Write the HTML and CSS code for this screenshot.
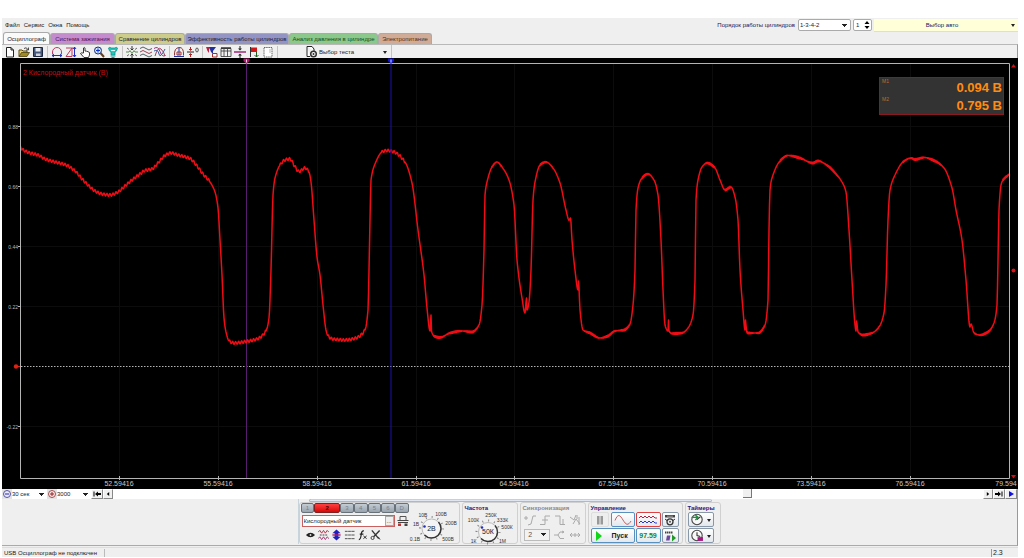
FILE: index.html
```html
<!DOCTYPE html>
<html lang="ru">
<head>
<meta charset="utf-8">
<title>USB Осциллограф</title>
<link rel="stylesheet" href="styles.css">
</head>
<body>
<div class="app">
  <header class="menubar">
    <nav class="menu">
      <button>Файл</button><button>Сервис</button><button>Окна</button><button>Помощь</button>
    </nav>
    <div class="engine">
      <label for="order">Порядок работы цилиндров</label>
      <select id="order" class="field order"><option>1-3-4-2</option></select>
      <div class="field spin">
        <input id="cyl" type="text" value="1" aria-label="Цилиндр">
        <svg viewBox="0 0 6 10" class="spin-arrows"><path d="M3 1L5.500 4H.5zM3 9L.5 6h5z"/></svg>
      </div>
      <button class="auto"><span>Выбор авто</span><svg viewBox="0 0 6 6" class="caret"><path d="M1 2h4L3 5z"/></svg></button>
    </div>
  </header>

  <nav class="tabs">
    <button class="tab scope">Осциллограф</button>
    <button class="tab ignition">Система зажигания</button>
    <button class="tab compare">Сравнение цилиндров</button>
    <button class="tab effect">Эффективность работы цилиндров</button>
    <button class="tab pressure">Анализ давления в цилиндре</button>
    <button class="tab power">Электропитание</button>
  </nav>

  <div class="toolbar">
    <div class="tools">
      <button aria-label="Новый"><svg viewBox="0 0 12 12"><path d="M2.500 1.500h4.500l2.500 2.500v7h-7zM7 1.500V4h2.500" fill="#fff" stroke="#222"/></svg></button>
      <button aria-label="Открыть"><svg viewBox="0 0 12 12"><path d="M1 10.500V4h3l1 1h4v2" fill="#e8d070" stroke="#5a4a10"/><path d="M1 10.500L3.500 6.500H11.500L9 10.500z" fill="#a08a20" stroke="#4a4010" stroke-width=".8"/><path d="M6 2.500q2-2 4 1M10.500 1.500V4H8" fill="none" stroke="#222" stroke-width=".8"/></svg></button>
      <button aria-label="Сохранить"><svg viewBox="0 0 12 12"><path d="M1.500 1.500h9v9h-9z" fill="#46587a" stroke="#1b2740"/><path d="M3.500 2h5v3.500h-5z" fill="#e8ecf4"/><path d="M4 7.500h4.500V10H4z" fill="#d0d4dc"/></svg></button>
    </div>
    <div class="tools">
      <button aria-label="Период"><svg viewBox="0 0 12 12" fill="none"><path d="M1.500 8V6a4.500 4.500 0 0 1 9 0v2" stroke="#c03a60"/><path d="M1 9.500h10M3 8L1 9.500 3 11M9 8l2 1.500L9 11" stroke="#2030c0"/></svg></button>
      <button aria-label="Амплитуда"><svg viewBox="0 0 12 12" fill="none"><path d="M1 10.500L7 2v8.500zM1 2h7" stroke="#c03a60"/><path d="M9.500 1v10M8 3l1.500-2L11 3M8 9l1.500 2L11 9" stroke="#2030c0"/></svg></button>
      <button aria-label="Рука"><svg viewBox="0 0 12 12"><path d="M4.500 7V2q.8-1 1.500 0v3l1.500.2 1.500.5 1.500.8V9l-1 2.500H5L1.500 7.500q.5-1 1.500-.5z" fill="#fff" stroke="#222" stroke-width=".9"/></svg></button>
      <button aria-label="Масштаб"><svg viewBox="0 0 12 12"><circle cx="5" cy="4.500" r="3.500" fill="#c8e4ff" stroke="#1c3070"/><path d="M3 4.500h4M5 2.500v4" stroke="#1030c0"/><path d="M7.500 7l3.500 4" stroke="#604020" stroke-width="2"/></svg></button>
      <button aria-label="Датчик"><svg viewBox="0 0 12 12"><path d="M1.500 2q1.500-1.500 2.500 0h4q1-1.500 2.500 0L9.500 5 8 6v3H4V6L2.500 5z" fill="#20c8b8" stroke="#108888" stroke-width=".7"/><path d="M3.500 10h5M4.500 11.500h3" stroke="#20a0a0"/><path d="M4 4.500h4" stroke="#e0fffa"/></svg></button>
    </div>
    <div class="tools">
      <button aria-label="Сжать"><svg viewBox="0 0 12 12" fill="none" stroke="#333"><path d="M6 0v4M4.500 2.500L6 4l1.500-1.500M6 12V8M4.500 9.500L6 8l1.500 1.500"/><path d="M0 6h3l1-1.500 2 3 2-3L9 6h3" stroke="#5a8a50"/><path d="M1 2l2 1.500M11 2L9 3.500M1 10l2-1.500M11 10L9 8.500" stroke="#666"/></svg></button>
      <button aria-label="Каналы раздельно"><svg viewBox="0 0 12 12" fill="none" stroke="#506060"><path d="M0 2.500q3-3 6 0t6 0"/><path d="M0 6q3-3 6 0t6 0" stroke="#a04050"/><path d="M0 9.500q3-3 6 0t6 0"/></svg></button>
      <button aria-label="Каналы вместе"><svg viewBox="0 0 12 12" fill="none"><path d="M0 2.500q4-3 6 3t5.500 4" stroke="#a03080"/><path d="M0 5q4-2 5 3t6-5" stroke="#3060a0"/><path d="M1 10Q4 0 7 3t4 7" stroke="#a04060"/></svg></button>
    </div>
    <div class="tools">
      <button aria-label="Такт"><svg viewBox="0 0 12 12" fill="none"><path d="M1.500 9.500Q1 2 6 1.500T10.500 9.500" stroke="#903030"/><path d="M6 2v7M1 10.500h10" stroke="#2030a0"/><path d="M4 9V6h4v3z" stroke="#a03030"/></svg></button>
      <button aria-label="Ноль"><svg viewBox="0 0 12 12" fill="none"><path d="M0 6h7" stroke="#222"/><path d="M3.500 1v3M3.500 11V8M2 3l1.500 1.500L5 3M2 9l1.500-1.500L5 9" stroke="#c02020"/><ellipse cx="10" cy="4" rx="1.300" ry="2" stroke="#333" stroke-width=".8"/></svg></button>
    </div>
    <div class="tools">
      <button aria-label="Фильтр"><svg viewBox="0 0 12 12"><path d="M0 1h4l-1 3v3L1.500 5z" fill="#c02040"/><path d="M3 1h7L7 5v3L5 6z" fill="#2030a0"/><path d="M6.500 7.500H11V11H6.500z" fill="#fff" stroke="#a03030"/></svg></button>
      <button aria-label="Таблица"><svg viewBox="0 0 12 12" fill="none" stroke="#333"><path d="M1 2.500h10v8H1zM1 5h10M4 3v7.500M7.500 3v7.500" stroke-width=".8"/><path d="M1 2h10" stroke-width="1.500"/></svg></button>
      <button aria-label="Разделить"><svg viewBox="0 0 12 12"><path d="M0 6h12" stroke="#a02878" stroke-width="1.500"/><path d="M6 0v3M6 12V9" stroke="#222"/><path d="M4 2.500h4L6 4.500zM4 9.500h4L6 7.500z" fill="#222"/></svg></button>
      <button aria-label="Флаг"><svg viewBox="0 0 12 12"><path d="M2.500 1v10" stroke="#333"/><path d="M3 1.500h6v4.500H3z" fill="#d01818"/><path d="M8.500 6v5M6.500 9l2 2 2-2" fill="none" stroke="#206020"/></svg></button>
      <button aria-label="Заметка"><svg viewBox="0 0 12 12"><path d="M2 1.500h8v9.500H2z" fill="#fff" stroke="#666" stroke-dasharray="1.500 .7"/><path d="M7 4h2M7 6h2" stroke="#999" stroke-width=".7"/></svg></button>
    </div>
    <button class="test">
      <svg viewBox="0 0 12 12"><path d="M1 .5h5L8 3v2M1 .5v10h3" fill="#fff" stroke="#222"/><circle cx="7.500" cy="8" r="2.800" fill="#fff" stroke="#333" stroke-width="1.500"/><circle cx="7.500" cy="8" r="1" fill="#333"/></svg>
      <span>Выбор теста</span>
      <svg viewBox="0 0 6 6" class="caret"><path d="M1 2h4L3 5z"/></svg>
    </button>
  </div>

  <main class="chart">
    <svg class="plot" viewBox="2 58 1016 431" role="img" aria-label="Осциллограмма">
      <path class="grid" d="M21 126.500H1009M21 186.500H1009M21 246.500H1009M21 306.500H1009M21 426.500H1009M119.500 64V478M218.500 64V478M317.500 64V478M416.500 64V478M514.500 64V478M613.500 64V478M712.500 64V478M811.500 64V478M910.500 64V478"/>
      <path class="zero" d="M21 366.500H1009"/>
      <path class="cursor-a" d="M246.500 60V478"/>
      <path id="trace" class="trace"/>
      <path class="cursor-b" d="M391 60V478"/>
      <path class="frame" d="M20.500 63.500H1009.500V478.500H20.500z"/>
      <path class="frame" d="M18 126.500h2M18 186.500h2M18 246.500h2M18 306.500h2M18 426.500h2M119.500 476v4M218.500 476v4M317.500 476v4M416.500 476v4M514.500 476v4M613.500 476v4M712.500 476v4M811.500 476v4M910.500 476v4"/>
      <path fill="#b01870" d="M243.500 58.500h6v2.500l-3 3-3-3z"/><path stroke="#ffd0e8" d="M246.500 59.500v3"/>
      <path fill="#1414d8" d="M388 58.500h6v2.500l-3 3-3-3z"/><path stroke="#c8e0ff" d="M391 59.500v3"/>
      <path fill="#d01018" d="M1011 67.500h5l-2.500-3.500zM1011 475h5l-2.500 3.500z"/>
      <circle cx="1013.500" cy="270.500" r="2" fill="#e01018"/>
      <circle cx="16" cy="366.500" r="2.200" fill="#e02010"/><path stroke="#e02010" d="M16 366.500h4"/>
      <g class="y-labels">
        <text x="18" y="128.500">0.88</text><text x="18" y="188.500">0.66</text><text x="18" y="248.500">0.44</text><text x="18" y="308.500">0.22</text><text x="18" y="428.500">-0.22</text>
      </g>
      <g class="x-labels">
        <text x="119" y="486">52.59416</text><text x="218" y="486">55.59416</text><text x="317" y="486">58.59416</text><text x="416" y="486">61.59416</text><text x="514" y="486">64.59416</text><text x="613" y="486">67.59416</text><text x="712" y="486">70.59416</text><text x="811" y="486">73.59416</text><text x="910" y="486">76.59416</text><text x="1006" y="486">79.594</text>
      </g>
      <text class="channel-name" x="23" y="75">2 Кислородный датчик (В)</text>
    </svg>
    <div class="readout">
      <div><small>M1</small><b>0.094 В</b></div>
      <div><small>M2</small><b>0.795 В</b></div>
    </div>
  </main>

  <div class="scroll">
    <svg viewBox="0 0 10 10" class="mark"><circle cx="5" cy="5" r="3.500" fill="#e8e8ff" stroke="#5858a0"/><path d="M3 5h4" stroke="#2828a0"/></svg>
    <select class="span" aria-label="Длительность"><option>30 сек</option></select>
    <svg viewBox="0 0 10 10" class="mark"><circle cx="5" cy="5" r="3.500" fill="#ffe8e8" stroke="#a05050"/><path d="M3 5h4M5 3v4" stroke="#902020"/></svg>
    <select class="points" aria-label="Точки"><option>3000</option></select>
    <button class="step" aria-label="В начало"><svg viewBox="0 0 10 8"><path d="M1.500 1.500h1v5h-1zM6 1.500v5L3 4zM9 3v2H6V3z"/></svg></button>
    <button class="step small" aria-label="Назад"><svg viewBox="0 0 10 8"><path d="M6.500 1.500v5L3.500 4z"/></svg></button>
    <div class="track"><button class="thumb" aria-label="Прокрутка"></button></div>
    <button class="step small" aria-label="Вперёд"><svg viewBox="0 0 10 8"><path d="M3.500 1.500v5L6.500 4z"/></svg></button>
    <button class="step" aria-label="В конец"><svg viewBox="0 0 10 8"><path d="M8.500 1.500h-1v5h1zM4 1.500v5L7 4zM1 3v2h3V3z"/></svg></button>
    <button class="step" aria-label="Воспроизвести"><svg viewBox="0 0 10 8"><path d="M3 1v6l5-3z" fill="#1010e0"/></svg></button>
  </div>

  <section class="dock">
    <div class="panel">
      <div class="grip"></div>
      <div class="groups">
        <div class="group channel">
          <div class="channel-main">
            <div class="channels">
              <button>1</button><button class="on">2</button><button>3</button><button>4</button><button>5</button><button>6</button><button>D</button>
            </div>
            <div class="sensor-row">
              <div class="sensor"><input type="text" value="Кислородный датчик" aria-label="Датчик"><button>...</button></div>
              <svg viewBox="0 0 12 12" class="ic"><path d="M3 5V1.500h6V5" fill="none" stroke="#555"/><path d="M.5 5.500h11M1 7.500h10" stroke="#444"/><path d="M1 8.500h3V11H1z" fill="#c03030"/><path d="M7.500 8.500h3V11h-3z" fill="#444"/></svg>
            </div>
            <div class="channel-tools">
              <button aria-label="Показать"><svg viewBox="0 0 12 12"><path d="M1 6q5-5 10 0-5 5-10 0z" fill="#222"/><circle cx="6" cy="6" r="1" fill="#ddd"/></svg></button>
              <button aria-label="Сигнал"><svg viewBox="0 0 12 12" fill="none"><path d="M0 3l2-2 2 3 2-3 2 3 2-3 2 2" stroke="#c02040"/><path d="M0 10l2-2 2 3 2-3 2 3 2-3 2 2" stroke="#a03070"/><path d="M2 6h8" stroke="#333" stroke-dasharray="2 1"/></svg></button>
              <button aria-label="Инверсия"><svg viewBox="0 0 12 12"><path d="M6 0l4.500 4H8v4h2.500L6 12 1.500 8H4V4H1.500z" fill="#2020c0"/><path d="M1.500 6h9" stroke="#b02060" stroke-width="1.500"/></svg></button>
              <button aria-label="Уровни"><svg viewBox="0 0 12 12"><path d="M1 2h11M1 6h11M1 10h11" stroke="#444" stroke-dasharray="3 .5"/></svg></button>
              <button aria-label="Фильтр"><svg viewBox="0 0 12 12" fill="none" stroke="#222"><path d="M2 11Q4 11 4.500 6T7.500 1.500M3 5h4" stroke-width="1.300"/><path d="M7 7l3.500 3M10.500 7L7 10"/></svg></button>
              <button aria-label="Настройка"><svg viewBox="0 0 12 12" fill="none" stroke="#333"><path d="M2 1l7.500 9M10.500 1L4 8" stroke-width="1.500"/><circle cx="2.800" cy="9.200" r="1.700"/><path d="M9 8l2 3"/></svg></button>
            </div>
          </div>
          <svg class="knob volts" viewBox="410 508 50 36" role="slider" aria-label="Диапазон" aria-valuenow="2">
            <circle cx="432.500" cy="530.500" r="11.500" class="ticks"/>
            <circle cx="432.500" cy="530.500" r="9.500" class="dial"/>
            <path d="M439.500 524a9.500 9.500 0 0 1-14 13" class="shade"/>
            <circle cx="425.500" cy="528.500" r="1.300" fill="#2030c0"/>
            <g><text x="416" y="543">0.1В</text><text x="417" y="528">1В</text><text x="424" y="519">10В</text><text x="442" y="518">100В</text><text x="452" y="527">200В</text><text x="449" y="543">500В</text></g>
            <text class="value" x="432.500" y="533">2В</text>
          </svg>
        </div>

        <fieldset class="group freq">
          <legend>Частота</legend>
          <svg class="knob" viewBox="463 511 54 33" role="slider" aria-label="Частота" aria-valuenow="50">
            <circle cx="488" cy="531" r="11.500" class="ticks"/>
            <circle cx="488" cy="531" r="9.500" class="dial"/>
            <path d="M495 524.500a9.500 9.500 0 0 1-14 13" class="shade"/>
            <circle cx="482" cy="526.500" r="1.300" fill="#2030c0"/>
            <g><text x="473.500" y="542">1К</text><text x="473.500" y="521">100К</text><text x="491" y="516">250К</text><text x="502.500" y="521">333К</text><text x="507" y="527.500">500К</text><text x="502.500" y="542">1М</text></g>
            <text class="value" x="488" y="533">50К</text>
          </svg>
        </fieldset>

        <fieldset class="group sync">
          <legend>Синхронизация</legend>
          <div class="sync-row">
            <svg viewBox="0 0 12 12" class="ic"><path d="M0 4h4M2 2v4M4 11l3-1 2-8h3"/></svg>
            <svg viewBox="0 0 12 12" class="ic"><path d="M1 10.500h5V2h5M3 6h6"/></svg>
            <svg viewBox="0 0 12 12" class="ic"><path d="M1 2h5v8.500h5M9 5v5"/></svg>
            <svg viewBox="0 0 12 12" class="ic"><path d="M1 3l4 3 2-5M4 10l3-5 4 5M8 1v4M10 3v8"/></svg>
          </div>
          <div class="sync-row">
            <select aria-label="Канал синхронизации" disabled><option>2</option></select>
            <svg viewBox="0 0 12 12" class="ic"><path d="M1 6h4l2-3h4M5 6l2 3.500h4M9 2l2 1-2 1"/></svg>
            <svg viewBox="0 0 12 12" class="ic"><path d="M1 6h10M3 4L1 6l2 2M9 4l2 2-2 2M6 4v4"/></svg>
          </div>
        </fieldset>

        <fieldset class="group control">
          <legend>Управление</legend>
          <div class="control-grid">
            <div class="pair">
              <button class="flat" aria-label="Пауза"><svg viewBox="0 0 12 12"><path d="M3 2h2.500v8.500H3zM6.500 2H9v8.500H6.500z" fill="#999"/></svg></button>
              <button class="blue wave" aria-label="Синус"><svg viewBox="0 0 18 12" fill="none"><path d="M1 6.500C4 -1 6 1 9 6s5 6 8 1" stroke="#c86060"/></svg></button>
            </div>
            <button class="red" aria-label="Сигналы"><svg viewBox="0 0 18 12" fill="none"><path d="M0 4l2-2 2 2 2-2 2 2 2-2 2 2 2-2 2 2h2" stroke="#c02040"/><path d="M0 9l2-2 2 2 2-2 2 2 2-2 2 2 2-2 2 2h2" stroke="#3038c0"/></svg></button>
            <button aria-label="Параметры"><svg viewBox="0 0 12 12"><path d="M1 1h10v2.500H1z" fill="#444"/><path d="M3 2.200h6" stroke="#ccc" stroke-width=".6"/><circle cx="6" cy="7.800" r="3" fill="#eee" stroke="#333" stroke-width="1.300"/><path d="M1 5l2 1.500M11 5L9 6.500" stroke="#333"/><circle cx="6" cy="7.800" r="1" fill="#555"/></svg></button>
            <button class="blue start"><svg viewBox="0 0 10 12"><path d="M2 1v10l6-5z" fill="#10d818"/></svg><span>Пуск</span></button>
            <button class="blue fps">97.59</button>
            <button aria-label="Авто"><svg viewBox="0 0 12 12"><path d="M1 2.500h8" stroke="#444" stroke-width="2" stroke-dasharray="1.500 .5"/><path d="M2 10.500h3.500l1-5H3z" fill="#7048a0"/><path d="M8 4.500v7l4-3.500z" fill="#209828"/></svg></button>
          </div>
        </fieldset>

        <fieldset class="group timers">
          <legend>Таймеры</legend>
          <button aria-label="Таймер запуска"><svg viewBox="0 0 12 12"><circle cx="6" cy="6" r="4.800" fill="#f8f8f8" stroke="#444"/><path d="M6 6l3-2.500" stroke="#333"/><path d="M1 4h5M4.500 2L7 4 4.500 6.500" fill="none" stroke="#209040" stroke-width="1.300"/></svg><svg viewBox="0 0 6 6" class="caret"><path d="M1 2h4L3 5z"/></svg></button>
          <button aria-label="Таймер остановки"><svg viewBox="0 0 12 12"><circle cx="6" cy="6" r="4.800" fill="#f8f8f8" stroke="#444"/><path d="M6 3v3l3 1" fill="none" stroke="#333"/><path d="M6.500 7.500h5v3.500h-5z" fill="#a01880"/></svg><svg viewBox="0 0 6 6" class="caret"><path d="M1 2h4L3 5z"/></svg></button>
        </fieldset>
      </div>
    </div>
  </section>

  <footer class="status"><span class="state">USB Осциллограф не подключен</span><span class="version">2.3</span></footer>
</div>
<script src="trace.js"></script>
</body>
</html>
```
FILE: styles.css
```css
* { box-sizing: border-box; }
body {
  margin: 0;
  padding: 18px 6px 0 2px;
  background: #fff;
  color: #222;
  font: 6px/8px "Liberation Sans", Arial, sans-serif;
}
button, input, select {
  margin: 0;
  padding: 0;
  border: 0;
  border-radius: 0;
  background: none;
  color: inherit;
  font: inherit;
  outline: 0;
}
svg { display: block; flex: none; }
.app { background: #efefef; }
.caret { width: 6px; height: 6px; fill: #222; }
.ic { width: 12px; height: 12px; }

.menubar { display: flex; justify-content: space-between; height: 14px; }
.menu { display: flex; align-items: center; gap: 4px; padding-left: 3px; }
.engine { display: flex; align-items: center; gap: 2px; }
.engine label { color: #202060; margin-right: 1px; }
.field { height: 12px; border: 1px solid #aaa; border-radius: 2px; background: #fff; }
.order, .span, .points, .sync select {
  appearance: none;
  background: #fff conic-gradient(from 315deg at 50% 100%, #222 90deg, transparent 0) no-repeat right 3px center / 5px 3px;
}
.order { width: 53px; padding-left: 1px; }
.spin { display: flex; align-items: center; width: 19px; padding: 0 2px; }
.spin input { width: 8px; }
.spin-arrows { width: 6px; height: 10px; }
.auto { display: flex; align-items: center; width: 144px; height: 13px; padding-right: 2px; background: #ffffd8; border-bottom: 1px solid #ddd; color: #202060; }
.auto span { flex: 1; text-align: center; }

.tabs { display: flex; align-items: flex-end; height: 12px; padding-left: 1px; }
.tab { height: 11px; border: 1px solid #aaa; border-bottom: 0; border-radius: 3px 3px 0 0; white-space: nowrap; color: #223; }
.scope { width: 47px; height: 12px; background: #fafafa; }
.ignition { width: 65px; background: #c48ccc; color: #501060; }
.compare { width: 70px; background: #cccc8c; }
.effect { width: 104px; background: #9494c4; }
.pressure { width: 89px; background: #8cc88c; color: #105020; }
.power { width: 54px; background: #d0ac98; color: #503020; }

.toolbar { display: flex; align-items: center; height: 14px; border-top: 1px solid #b8b8b8; border-right: 1px solid #999; background: #f0f0f0; }
.tools { display: flex; padding: 0 2px; border-right: 1px solid #c4c4c4; }
.tools:first-child { padding-left: 1px; }
.tools button { width: 14px; padding: 0 1px; }
.tools svg { width: 12px; height: 12px; }
.test { display: flex; align-items: center; gap: 1px; width: 114px; height: 13px; padding: 0 3px 0 28px; border-right: 1px solid #c4c4c4; }
.test span { flex: 1; text-align: left; }
.test svg:first-child { width: 12px; height: 12px; }

.chart { position: relative; background: #000; }
.plot { width: 100%; height: auto; overflow: hidden; }
.grid, .zero, .trace, .frame { fill: none; }
.grid { stroke: #0c0c0c; }
.zero { stroke: #b4b4b4; stroke-dasharray: 1.500 1.500; }
.cursor-a { stroke: #5a1c6c; }
.cursor-b { stroke: #1a10b0; }
.trace { stroke: #f00c14; stroke-width: 1.500; stroke-linejoin: round; }
.frame { stroke: #b4b4b4; }
.y-labels { fill: #b8b8b8; font-size: 5px; text-anchor: end; }
.x-labels { fill: #c8c8c8; font-size: 7px; text-anchor: middle; }
.channel-name { fill: #c01018; font-size: 7px; }
.readout { position: absolute; top: 19px; right: 14px; width: 125px; padding: 0 1px; border: 1px solid #8c1820; background: #333; color: #ff8c10; }
.readout div { display: flex; justify-content: space-between; height: 18px; }
.readout small { padding-left: 1px; font-size: 5px; line-height: 6px; color: #b87030; }
.readout b { font-size: 13px; line-height: 19px; }

.scroll { display: flex; align-items: center; height: 10px; background: #fafafa; border-right: 1px solid #999; }
.mark { width: 10px; height: 10px; background: #e4e4e4; }
.span, .points { height: 10px; }
.span { width: 35px; }
.points { width: 34px; }
.step { width: 12px; height: 10px; background: #f0f0f0; border: 1px solid #fff; border-right-color: #888; border-bottom-color: #888; }
.step.small { width: 10px; }
.step svg { width: 100%; height: 8px; }
.track { display: flex; flex: 1; height: 10px; background: #fff; }
.thumb { width: 9px; height: 9px; margin-left: 72.4%; background: #f0f0f0; border-right: 1px solid #777; border-bottom: 1px solid #777; }

.dock { display: flex; justify-content: center; border-right: 1px solid #999; border-bottom: 1px solid #aaa; padding-bottom: 1px; }
.panel { width: 424px; border-left: 1px solid #c8d4dc; }
.grip { height: 3px; margin: 0 10px; border: 1px solid #a8b8d8; border-top-style: dotted; border-radius: 2px; background: #dfe6f2; }
.groups { display: flex; gap: 2px; }
.group { flex: none; min-width: 0; height: 42px; margin: 0; padding: 1px 2px; border: 1px solid #d0d0d0; border-radius: 3px; }
.group legend { float: left; width: 100%; height: 8px; padding: 0; color: #202080; font-weight: bold; }

.channel { display: flex; width: 161px; padding: 0 0 0 1px; }
.channel-main { display: flex; flex-direction: column; gap: 2px; width: 111px; }
.channels { display: flex; height: 10px; }
.channels button { flex: 1; border: 1px solid #687078; border-radius: 2px; background: linear-gradient(#c4ccd4, #98a4b0); color: #75808a; line-height: 6px; }
.channels .on { flex: 0 0 26px; background: linear-gradient(#ff4040, #d80808); border-color: #802020; color: #400; font-weight: bold; }
.sensor-row { display: flex; align-items: center; gap: 2px; }
.sensor { display: flex; flex: 1; height: 12px; margin-left: 1px; border: 1px solid #c86060; background: #fff; }
.sensor input { flex: 1; min-width: 0; padding-left: 1px; }
.sensor button { width: 9px; background: #eee; border: 1px solid #aaa; line-height: 4px; }
.channel-tools { display: flex; padding-left: 3px; }
.channel-tools button { width: 13px; }
.channel-tools svg { width: 11px; height: 12px; margin: 0 auto; }
.knob { width: 50px; height: 36px; margin-top: 3px; overflow: visible; }
.knob text { font-size: 5px; text-anchor: middle; fill: #333; }
.knob .value { font-size: 7px; fill: #222; }
.ticks { fill: none; stroke: #888; stroke-width: 2; stroke-dasharray: 1 5; }
.dial { fill: #f4f4f4; stroke: #bbb; }
.shade { fill: none; stroke: #333; stroke-width: 1.500; }

.freq { width: 56px; padding: 1px 0; }
.freq legend { padding-left: 2px; }
.freq .knob { width: 54px; height: 33px; margin: -1px 0 0; }

.sync { width: 66px; }
.sync legend { color: #888; }
.sync-row { display: flex; align-items: center; justify-content: space-around; clear: both; height: 15px; }
.sync-row .ic { fill: none; stroke: #aaa; }
.sync select { width: 26px; height: 12px; padding-left: 3px; border: 1px solid #bbb; background-color: #f2f2f2; font-size: 7px; opacity: 1; color: #555; }

.control { width: 95px; }
.control-grid { display: grid; clear: both; grid-template-columns: 44px 25px 17px; gap: 1px; }
.control-grid button, .timers button { display: flex; align-items: center; justify-content: center; height: 15px; border: 1px solid #8898a8; border-radius: 2px; background: linear-gradient(#fff, #e4e8ec); }
.control-grid svg { height: 12px; }
.pair { display: flex; gap: 2px; }
.control-grid .flat { flex: 1; border-color: #ddd; background: #eee; }
.control-grid .wave { width: 24px; }
.control-grid .blue { border-color: #5890c0; }
.control-grid .red { border-color: #e04040; }
.control-grid .start { justify-content: flex-start; gap: 8px; padding-left: 2px; font-size: 7px; font-weight: bold; }
.control-grid .fps { color: #108828; font-size: 7px; font-weight: bold; }

.timers { width: 36px; }
.timers button { clear: both; width: 26px; margin-bottom: 1px; gap: 2px; }
.timers button svg:first-child { width: 14px; height: 13px; }

.status { display: flex; align-items: center; height: 10px; margin-top: 1px; border-top: 1px solid #ddd; }
.state { width: 103px; padding-left: 2px; border-right: 1px solid #bbb; white-space: nowrap; }
.version { width: 27px; margin-left: auto; padding-left: 1px; border-left: 1px solid #999; font-size: 7px; }
```
FILE: trace.js
```js
// Sensor trace: knots as x,y pairs joined by a monotone curve.
const knots = `20.5,147.5 24,150.5 30,153 38,155 45,159 55,162 66,165 75,171 83,180 90,187 95,191 102,194 110,195 118,192 125,186 132,180 140,174 145,170.5 152,169 158,163 165,155.5 171,153 178,155 190,158.5 197,166 203,174 210,182 215,192 218,208 220,240 222,275 224,318 226,332 229,341 234,343 246,341.5 257,339 266,331 269,318 271,270 273,195 275,178 280,165 285,160 290,159 294,165 299,171.5 305,168 309,172 311,182 314,220 317,257 320,275 323,305 326,330 328,336 333,339 345,340 356,338 365,330 368,310 369,270 370,220 371,180 375,164 382,152 387,150.5 394,152 405,162 412,183 418,230 424,275 427,308 430,331 431,315 431.5,331 434,336 440,337.5 450,333 462,331 472,332 479,325 482,305 484,250 485,195 487,182 492,167 497,162 502,167 509,180 514,205 517,260 522,298 525,313 526.5,298 527,310 529,302 531,270 533,200 535,182 540,165 546,162 553,168 560,183 566,210 569,220 570.5,218 572,240 575,270 578,290 578.5,281 580,310 583,330 590,333 600,338 608,336 615,331 624,330 630,324 633,305 635,270 636,210 638,188 642,178 648,174 654,180 658,195 661,240 663,290 665,325 668,331 668.5,320 669,331 672,333.5 682,333 688,328 693,315 695,280 696,200 698,180 702,167 707,163 715,168 720,180 725,190 731,187 735,197 738,220 740,270 743,310 745,330 745.5,320 746.5,331 748,333 758,333 765,325 768,300 769,230 770,190 772,178 780,161 788,155.5 800,158 813,163 818,161 828,166 836,174 842,182 846,192 849,230 852,280 855,325 856,331 856.5,321 858,332 863,335 872,333 879,327 884,313 886,285 888,220 890,190 895,175 903,162 911,158 915,159.5 924,157.5 935,161 944,168 952,188 956,210 962,240 966,280 970,327 971,324 974,333 980,335 988,332 994,323 997,305 998,260 999,210 1001,185 1003,180 1009.5,174`
  .split(' ').map(p => p.split(',').map(Number));

const slope = i => (knots[i + 1][1] - knots[i][1]) / (knots[i + 1][0] - knots[i][0]);
const tangent = knots.map((_, i) => {
  if (i === 0) return slope(0);
  if (i === knots.length - 1) return slope(i - 1);
  const a = slope(i - 1), b = slope(i);
  return a * b <= 0 ? 0 : 2 * a * b / (a + b);
});

const out = [];
for (let i = 0; i < knots.length - 1; i++) {
  const [x0, y0] = knots[i], [x1, y1] = knots[i + 1], h = x1 - x0;
  const steps = Math.max(1, Math.ceil(h * 2));
  for (let s = 0; s < steps; s++) {
    const t = s / steps, t2 = t * t, t3 = t2 * t, x = x0 + t * h;
    let y = (2 * t3 - 3 * t2 + 1) * y0 + (t3 - 2 * t2 + t) * h * tangent[i]
      + (3 * t2 - 2 * t3) * y1 + (t3 - t2) * h * tangent[i + 1];
    // Ripple shows on the level stretches; it is slower early in the record.
    if (Math.abs(slope(i)) < 1.6) {
      y += x < 405 ? 1.4 * Math.sin(x * 2.1) : 0.9 * Math.sin(x * 6.1);
    }
    out.push(x.toFixed(1) + ' ' + y.toFixed(1));
  }
}
out.push(knots[knots.length - 1].join(' '));
document.getElementById('trace').setAttribute('d', 'M' + out.join('L'));
```
